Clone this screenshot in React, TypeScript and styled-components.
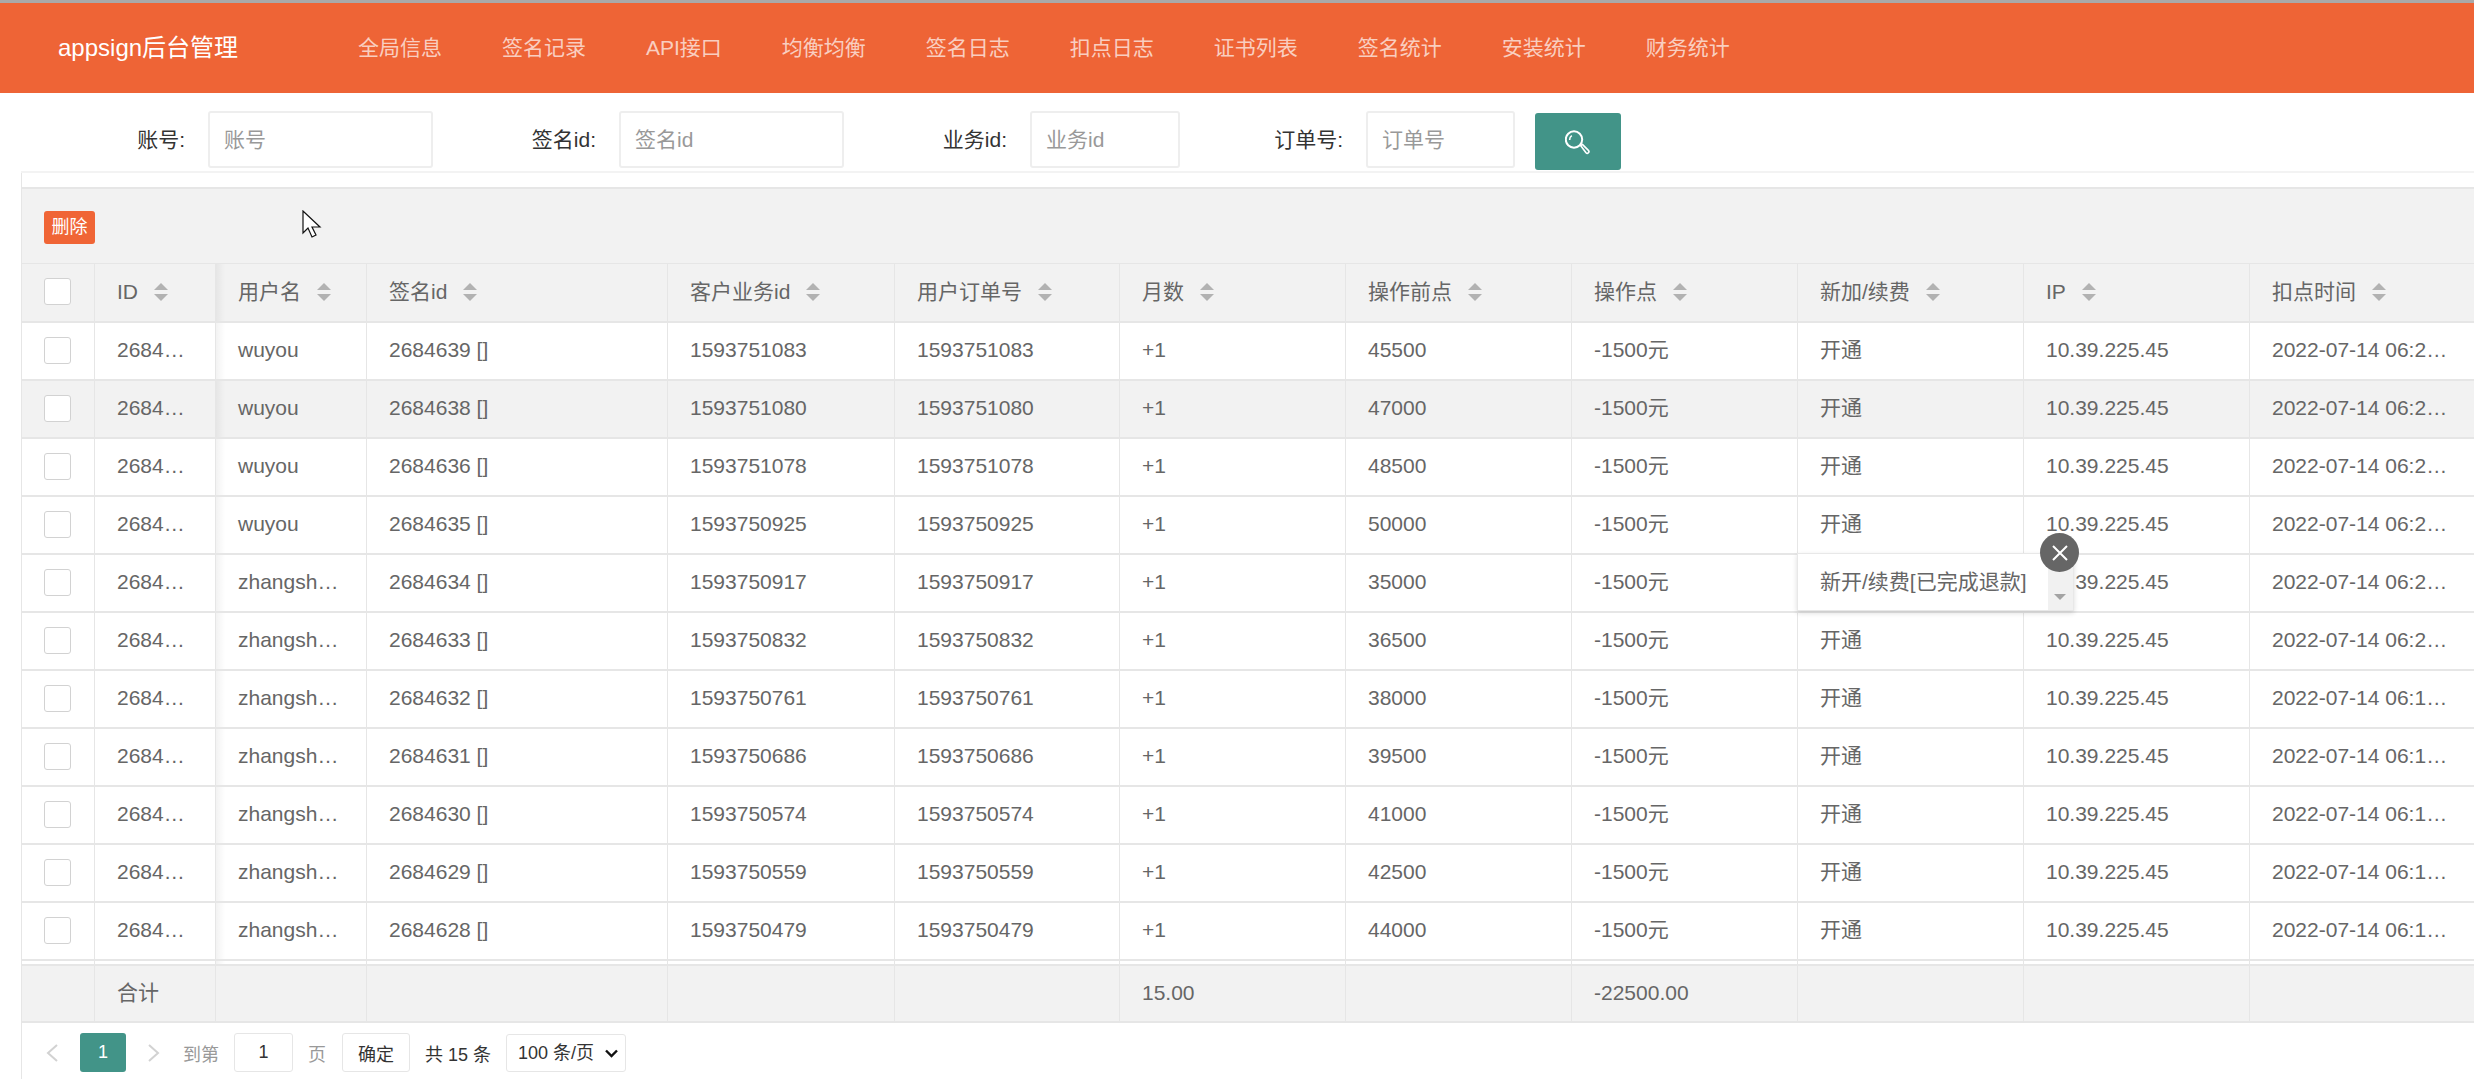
import styled, { createGlobalStyle } from 'styled-components';

const GlobalStyle = createGlobalStyle`
  html, body {
    margin: 0;
    padding: 0;
    background: #fff;
    overflow: hidden;
  }
  body {
    font-family: "Liberation Sans", "Noto Sans CJK SC", sans-serif;
    font-size: 21px;
    color: #666;
  }
  * {
    box-sizing: border-box;
  }
`;

const Page = styled.div`
  position: relative;
  width: 2474px;
  height: 1079px;
  overflow: hidden;
`;

const Header = styled.header`
  height: 93px;
  display: flex;
  align-items: center;
  background: #ee6436;
  border-top: 3px solid #a9a9a9;
  padding-left: 58px;
`;

const Logo = styled.div`
  width: 270px;
  font-size: 24px;
  line-height: 36px;
  color: #fff;
  white-space: nowrap;
`;

const Nav = styled.nav`
  display: flex;
`;

const NavItem = styled.a`
  padding: 0 30px;
  font-size: 21px;
  line-height: 36px;
  color: rgba(255, 255, 255, 0.7);
  white-space: nowrap;
`;

const SearchForm = styled.form`
  display: flex;
  height: 78px;
  padding-top: 18px;
  margin: 0;
`;

const FormLabel = styled.label<{ $width: number }>`
  width: ${(p) => p.$width}px;
  height: 57px;
  padding-right: 23px;
  text-align: right;
  font-size: 21px;
  line-height: 57px;
  color: #333;
  white-space: nowrap;
`;

const TextInput = styled.input<{ $width: number }>`
  width: ${(p) => p.$width}px;
  height: 57px;
  padding: 0 14px;
  border: 2px solid #eee;
  border-radius: 3px;
  font: inherit;
  color: #333;
  outline: none;
  background: #fff;
  &::placeholder {
    color: #999;
  }
`;

const SearchButton = styled.button`
  width: 86px;
  height: 57px;
  margin: 2px 0 0 20px;
  display: flex;
  align-items: center;
  justify-content: center;
  background: #429488;
  border: none;
  border-radius: 3px;
  padding: 0;
`;

const Section = styled.section`
  margin-left: 21px;
  height: 908px;
  border-left: 1px solid #e6e6e6;
`;

const FormRule = styled.div`
  height: 2px;
  background: #f3f3f3;
  margin-left: -1px;
`;

const Toolbar = styled.div`
  height: 76px;
  margin-top: 14px;
  display: flex;
  align-items: center;
  padding: 3px 0 0 22px;
  background: #f2f2f2;
  border-top: 2px solid #e6e6e6;
`;

const DeleteButton = styled.button`
  width: 51px;
  height: 33px;
  padding: 0;
  border: none;
  border-radius: 3px;
  background: #f06536;
  color: #fff;
  font-family: inherit;
  font-size: 18px;
  line-height: 33px;
`;

const Table = styled.table`
  border-collapse: separate;
  border-spacing: 0;
  table-layout: fixed;
  width: 2454px;
`;

const Row = styled.tr<{ $active?: boolean }>`
  background: ${(p) => (p.$active ? '#f2f2f2' : '#fff')};
`;

const HeadRow = styled.tr`
  background: #f2f2f2;
`;

const Cell = styled.td`
  height: 58px;
  padding: 0 22px 2px;
  border-right: 1px solid #e6e6e6;
  border-bottom: 2px solid #e6e6e6;
  font-size: 21px;
  line-height: 30px;
  font-weight: 400;
  color: #666;
  text-align: left;
  white-space: nowrap;
  overflow: hidden;
  text-overflow: ellipsis;
  &:nth-child(3) {
    background-image: linear-gradient(to right, rgba(0, 0, 0, 0.05), rgba(0, 0, 0, 0));
    background-size: 9px 100%;
    background-repeat: no-repeat;
  }
`;

const HeadCell = styled(Cell).attrs({ as: 'th' })`
  height: 60px;
  border-top: 1px solid #e6e6e6;
`;

const SpacerCell = styled.td`
  height: 3px;
  padding: 0;
  border-right: 1px solid #e6e6e6;
  &:nth-child(3) {
    background-image: linear-gradient(to right, rgba(0, 0, 0, 0.05), rgba(0, 0, 0, 0));
    background-size: 9px 100%;
    background-repeat: no-repeat;
  }
`;

const TotalCell = styled.td`
  height: 59px;
  padding: 0 22px 2px;
  background: #f2f2f2;
  border-top: 2px solid #e6e6e6;
  border-right: 1px solid #e6e6e6;
  border-bottom: 2px solid #e6e6e6;
  font-size: 21px;
  line-height: 30px;
  color: #666;
`;

const CheckBox = styled.span`
  display: block;
  width: 27px;
  height: 27px;
  background: #fff;
  border: 1px solid #d2d2d2;
  border-radius: 3px;
`;

const HeadLabel = styled.span`
  display: inline-flex;
  align-items: center;
  gap: 16px;
`;

const SortCaret = styled.span`
  display: inline-flex;
  flex-direction: column;
  gap: 4px;
  &::before,
  &::after {
    content: '';
    display: block;
    width: 0;
    height: 0;
    border-left: 7px solid transparent;
    border-right: 7px solid transparent;
  }
  &::before {
    border-bottom: 7px solid #b2b2b2;
  }
  &::after {
    border-top: 7px solid #b2b2b2;
  }
`;

const Pager = styled.div`
  display: flex;
  align-items: center;
  height: 56px;
  padding: 3px 0 0 24px;
  font-size: 18px;
  color: #999;
`;

const PagerArrow = styled.svg`
  display: block;
  width: 12px;
  height: 18px;
`;

const PageNumber = styled.span`
  width: 46px;
  height: 39px;
  margin: 0 22px;
  background: #429488;
  border-radius: 3px;
  color: #fff;
  text-align: center;
  line-height: 39px;
`;

const PagerText = styled.span<{ $dark?: boolean; $gap?: number }>`
  margin-left: ${(p) => p.$gap ?? 15}px;
  color: ${(p) => (p.$dark ? '#333' : '#999')};
  white-space: nowrap;
`;

const PageInput = styled.input`
  width: 59px;
  height: 39px;
  margin-left: 15px;
  padding: 0;
  border: 1px solid #e6e6e6;
  border-radius: 3px;
  text-align: center;
  font: inherit;
  color: #333;
`;

const ConfirmButton = styled.button`
  width: 68px;
  height: 39px;
  margin-left: 16px;
  padding: 0;
  border: 1px solid #e6e6e6;
  border-radius: 3px;
  background: #fff;
  font: inherit;
  color: #333;
`;

const PageSizeBox = styled.span`
  position: relative;
  display: block;
  width: 120px;
  height: 38px;
  margin-left: 15px;
`;

const PageSize = styled.select`
  width: 100%;
  height: 100%;
  padding: 0 0 0 11px;
  appearance: none;
  border: 1px solid #e6e6e6;
  border-radius: 3px;
  background: #fff;
  font: inherit;
  color: #333;
`;

const PageSizeChevron = styled.svg`
  position: absolute;
  right: 8px;
  top: 15px;
  width: 13px;
  height: 9px;
  pointer-events: none;
`;

const TipBox = styled.div`
  position: absolute;
  left: 1797px;
  top: 553px;
  width: 277px;
  height: 58px;
  display: flex;
  justify-content: space-between;
  background: #fff;
  border: 1px solid #e8e8e8;
  box-shadow: 0 2px 5px rgba(0, 0, 0, 0.14);
  font-size: 21px;
  line-height: 56px;
  color: #666;
`;

const TipText = styled.span`
  padding-left: 22px;
  white-space: nowrap;
`;

const TipScroll = styled.span`
  position: relative;
  width: 25px;
  background: #f1f1f1;
  &::after {
    content: '';
    position: absolute;
    left: 6px;
    bottom: 10px;
    border-left: 6px solid transparent;
    border-right: 6px solid transparent;
    border-top: 6px solid #a3a3a3;
  }
`;

const TipClose = styled.span`
  position: absolute;
  left: 2040px;
  top: 533px;
  width: 39px;
  height: 39px;
  display: flex;
  align-items: center;
  justify-content: center;
  border-radius: 50%;
  background: #666;
`;

const Pointer = styled.svg`
  position: absolute;
  left: 302px;
  top: 210px;
  width: 20px;
  height: 29px;
`;

const navItems = ['全局信息', '签名记录', 'API接口', '均衡均衡', '签名日志', '扣点日志', '证书列表', '签名统计', '安装统计', '财务统计'];

const columns = [
  { title: 'ID', width: 121 },
  { title: '用户名', width: 151 },
  { title: '签名id', width: 301 },
  { title: '客户业务id', width: 227 },
  { title: '用户订单号', width: 225 },
  { title: '月数', width: 226 },
  { title: '操作前点', width: 226 },
  { title: '操作点', width: 226 },
  { title: '新加/续费', width: 226 },
  { title: 'IP', width: 226 },
  { title: '扣点时间', width: 226 },
];

const records = [
  { id: 2684639, user: 'wuyou', order: 1593751083, before: 45500, time: '06:25:41' },
  { id: 2684638, user: 'wuyou', order: 1593751080, before: 47000, time: '06:25:12' },
  { id: 2684636, user: 'wuyou', order: 1593751078, before: 48500, time: '06:24:50' },
  { id: 2684635, user: 'wuyou', order: 1593750925, before: 50000, time: '06:22:18' },
  { id: 2684634, user: 'zhangshuai', order: 1593750917, before: 35000, time: '06:21:55' },
  { id: 2684633, user: 'zhangshuai', order: 1593750832, before: 36500, time: '06:20:37' },
  { id: 2684632, user: 'zhangshuai', order: 1593750761, before: 38000, time: '06:19:26' },
  { id: 2684631, user: 'zhangshuai', order: 1593750686, before: 39500, time: '06:18:11' },
  { id: 2684630, user: 'zhangshuai', order: 1593750574, before: 41000, time: '06:16:20' },
  { id: 2684629, user: 'zhangshuai', order: 1593750559, before: 42500, time: '06:16:04' },
  { id: 2684628, user: 'zhangshuai', order: 1593750479, before: 44000, time: '06:14:43' },
];

function SearchIcon() {
  return (
    <svg width="26" height="26" viewBox="1 0 26 26" fill="none" stroke="#fff">
      <circle cx="10" cy="10.5" r="8.2" strokeWidth="2" />
      <path d="M5.6 11a5 5 0 0 1 2.2-4.4" strokeWidth="1.6" />
      <path d="M16.6 16.6 L18.4 15.4 L24.4 21.4 a1.6 1.6 0 0 1 -2.4 2.4 Z" strokeWidth="1.6" strokeLinejoin="round" />
    </svg>
  );
}

export default function App() {
  return (
    <Page>
      <GlobalStyle />
      <Header>
        <Logo>appsign后台管理</Logo>
        <Nav>
          {navItems.map((item) => (
            <NavItem key={item}>{item}</NavItem>
          ))}
        </Nav>
      </Header>
      <SearchForm>
        <FormLabel $width={208}>账号:</FormLabel>
        <TextInput $width={225} placeholder="账号" />
        <FormLabel $width={186}>签名id:</FormLabel>
        <TextInput $width={225} placeholder="签名id" />
        <FormLabel $width={186}>业务id:</FormLabel>
        <TextInput $width={150} placeholder="业务id" />
        <FormLabel $width={186}>订单号:</FormLabel>
        <TextInput $width={149} placeholder="订单号" />
        <SearchButton type="button">
          <SearchIcon />
        </SearchButton>
      </SearchForm>
      <Section>
        <FormRule />
        <Toolbar>
          <DeleteButton type="button">删除</DeleteButton>
        </Toolbar>
        <Table>
          <colgroup>
            <col style={{ width: 73 }} />
            {columns.map((c) => (
              <col key={c.title} style={{ width: c.width }} />
            ))}
          </colgroup>
          <thead>
            <HeadRow>
              <HeadCell>
                <CheckBox />
              </HeadCell>
              {columns.map((c) => (
                <HeadCell key={c.title}>
                  <HeadLabel>
                    {c.title}
                    <SortCaret />
                  </HeadLabel>
                </HeadCell>
              ))}
            </HeadRow>
          </thead>
          <tbody>
            {records.map((r, i) => (
              <Row key={r.id} $active={i === 1}>
                <Cell>
                  <CheckBox />
                </Cell>
                <Cell>{r.id}</Cell>
                <Cell>{r.user}</Cell>
                <Cell>{r.id} []</Cell>
                <Cell>{r.order}</Cell>
                <Cell>{r.order}</Cell>
                <Cell>+1</Cell>
                <Cell>{r.before}</Cell>
                <Cell>-1500元</Cell>
                <Cell>开通</Cell>
                <Cell>10.39.225.45</Cell>
                <Cell>2022-07-14 {r.time}</Cell>
              </Row>
            ))}
            <tr>
              {[0, ...columns.map((c) => c.width)].map((w, i) => (
                <SpacerCell key={`${w}-${i}`} />
              ))}
            </tr>
          </tbody>
          <tfoot>
            <tr>
              <TotalCell />
              <TotalCell>合计</TotalCell>
              <TotalCell />
              <TotalCell />
              <TotalCell />
              <TotalCell />
              <TotalCell>15.00</TotalCell>
              <TotalCell />
              <TotalCell>-22500.00</TotalCell>
              <TotalCell />
              <TotalCell />
              <TotalCell />
            </tr>
          </tfoot>
        </Table>
        <Pager>
          <PagerArrow viewBox="0 0 12 18" fill="none" stroke="#d2d2d2" strokeWidth="2">
            <path d="M11 1 L2 9 L11 17" />
          </PagerArrow>
          <PageNumber>1</PageNumber>
          <PagerArrow viewBox="0 0 12 18" fill="none" stroke="#d2d2d2" strokeWidth="2">
            <path d="M1 1 L10 9 L1 17" />
          </PagerArrow>
          <PagerText $gap={23}>到第</PagerText>
          <PageInput defaultValue="1" />
          <PagerText>页</PagerText>
          <ConfirmButton type="button">确定</ConfirmButton>
          <PagerText $dark>共 15 条</PagerText>
          <PageSizeBox>
            <PageSize defaultValue="100">
              <option value="100">100 条/页</option>
            </PageSize>
            <PageSizeChevron viewBox="0 0 13 9" fill="none" stroke="#111" strokeWidth="2.4">
              <path d="M1 1.5 L6.5 7 L12 1.5" />
            </PageSizeChevron>
          </PageSizeBox>
        </Pager>
      </Section>
      <TipBox>
        <TipText>新开/续费[已完成退款]</TipText>
        <TipScroll />
      </TipBox>
      <TipClose>
        <svg width="16" height="16" viewBox="0 0 16 16" stroke="#fff" strokeWidth="2">
          <path d="M1 1 L15 15 M15 1 L1 15" />
        </svg>
      </TipClose>
      <Pointer viewBox="0 0 20 29">
        <path d="M1 1 L1 23 L6 18 L10 27 L14 25 L10 17 L18 17 Z" fill="#fff" stroke="#111" strokeWidth="1.2" />
      </Pointer>
    </Page>
  );
}
